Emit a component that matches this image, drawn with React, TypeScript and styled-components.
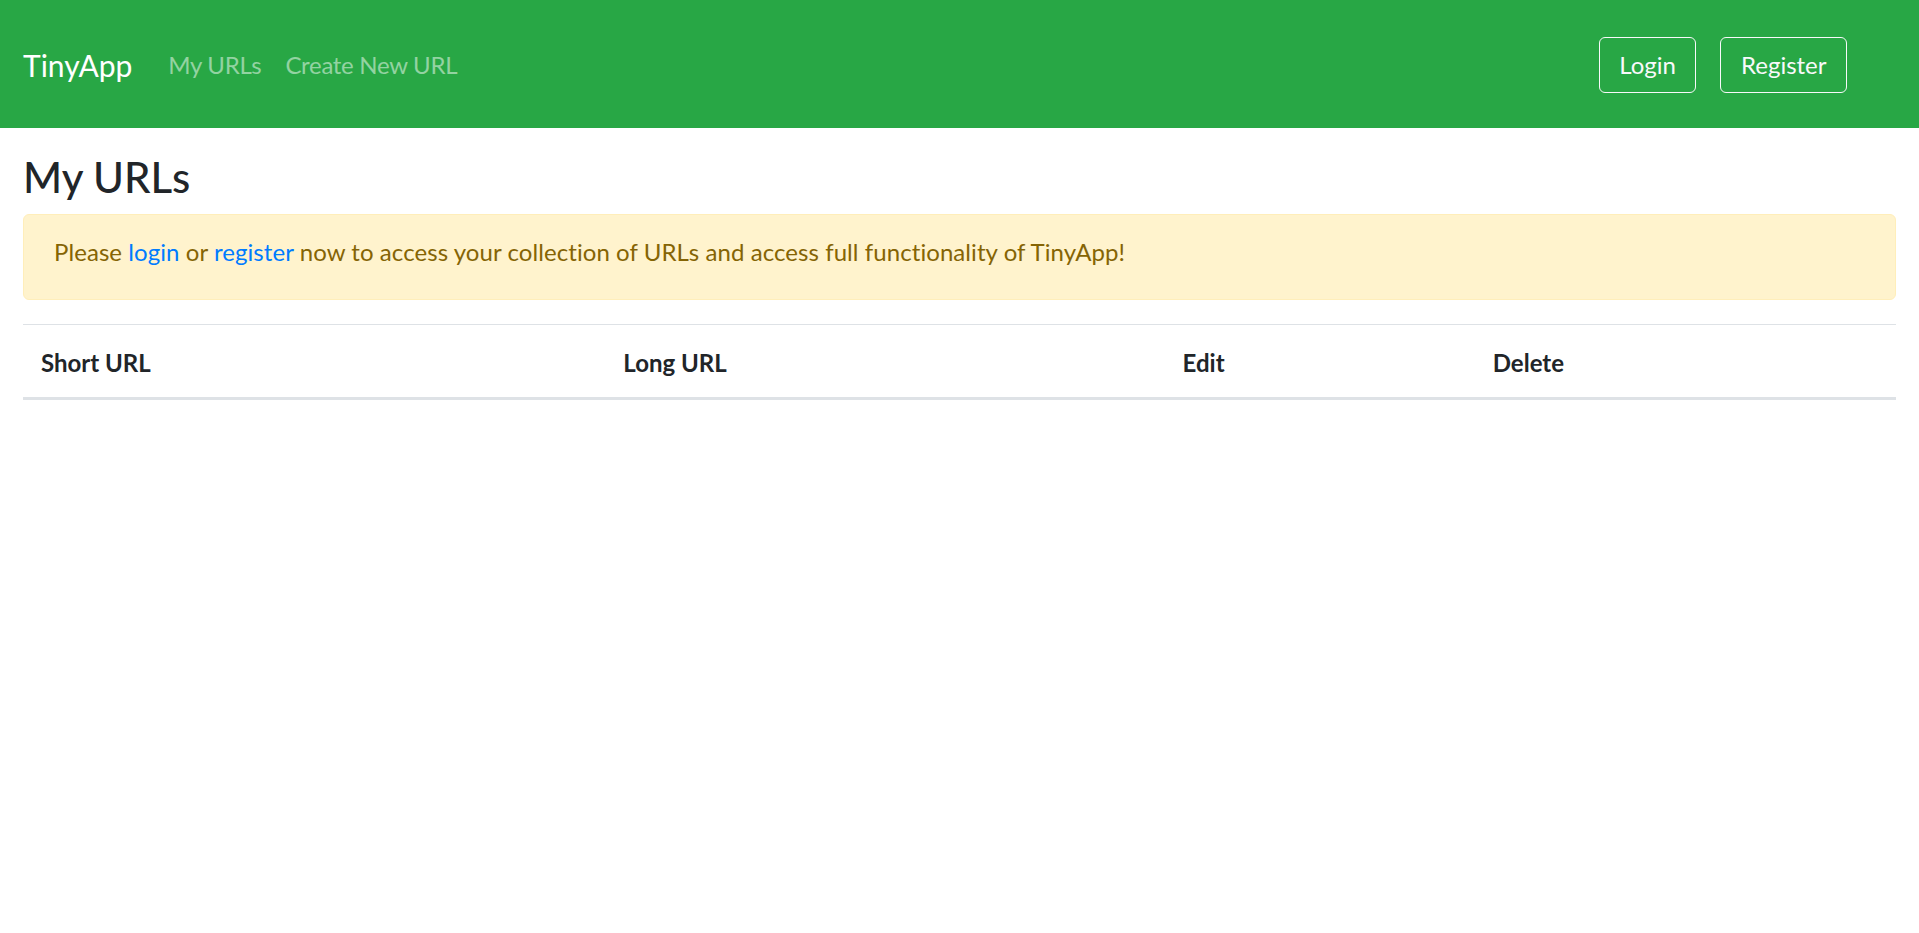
import React from "react";
import styled, { createGlobalStyle } from "styled-components";

const GlobalStyle = createGlobalStyle`
  * { box-sizing: border-box; }
  body {
    margin: 0;
    background: #ffffff;
    color: #212529;
    font-family: Lato, "Open Sans", "Liberation Sans", sans-serif;
    font-size: 24px;
    line-height: 1.5;
  }
`;

const Navbar = styled.nav`
  display: flex;
  align-items: center;
  height: 128px;
  padding: 2px 72px 0 23px;
  background: #28a745;
`;

const Brand = styled.a`
  font-size: 30px;
  line-height: 45px;
  color: #ffffff;
  text-decoration: none;
  margin-right: 24px;
`;

const NavList = styled.div`
  display: flex;
  align-items: center;
`;

const NavLink = styled.a`
  padding: 0 12px;
  font-size: 24px;
  line-height: 36px;
  letter-spacing: -0.3px;
  color: rgba(255, 255, 255, 0.5);
  text-decoration: none;
`;

const NavRight = styled.div`
  margin-left: auto;
  display: flex;
  align-items: center;
  gap: 24px;
`;

const OutlineButton = styled.button`
  font-family: inherit;
  font-size: 24px;
  line-height: 36px;
  padding: 9px 19.5px;
  color: #f8f9fa;
  background: transparent;
  border: 1.5px solid #f8f9fa;
  border-radius: 6px;
  cursor: pointer;
`;

const Main = styled.main`
  padding: 0 23px;
`;

const Title = styled.h1`
  margin: 23.6px 0 12px;
  font-size: 42px;
  line-height: 1.2;
  font-weight: 500;
`;

const Alert = styled.div`
  padding: 19.5px 30px 28.5px;
  margin-bottom: 24px;
  background: #fff3cd;
  border: 1.5px solid #ffeeba;
  border-radius: 6px;
  color: #856404;
  font-size: 24px;
  line-height: 36px;
  letter-spacing: 0.07px;
`;

const AlertLink = styled.a`
  color: #007bff;
  text-decoration: none;
`;

const Table = styled.table`
  width: 100%;
  border-collapse: collapse;
`;

const HeadCell = styled.th<{ $w: number }>`
  width: ${(p) => p.$w}px;
  padding: 20px 18px 16px;
  text-align: left;
  vertical-align: bottom;
  font-weight: 700;
  font-size: 24px;
  line-height: 36px;
  border-top: 1.5px solid #dee2e6;
  border-bottom: 3px solid #dee2e6;
`;

const columns = [
  { label: "Short URL", w: 582 },
  { label: "Long URL", w: 559 },
  { label: "Edit", w: 310 },
  { label: "Delete", w: 421 },
];

export default function App() {
  return (
    <>
      <GlobalStyle />
      <Navbar>
        <Brand href="#">TinyApp</Brand>
        <NavList>
          <NavLink href="#">My URLs</NavLink>
          <NavLink href="#">Create New URL</NavLink>
        </NavList>
        <NavRight>
          <OutlineButton>Login</OutlineButton>
          <OutlineButton>Register</OutlineButton>
        </NavRight>
      </Navbar>
      <Main>
        <Title>My URLs</Title>
        <Alert>
          Please <AlertLink href="#">login</AlertLink> or{" "}
          <AlertLink href="#">register</AlertLink> now to access your collection of URLs and
          access full functionality of TinyApp!
        </Alert>
        <Table>
          <thead>
            <tr>
              {columns.map((c) => (
                <HeadCell key={c.label} $w={c.w}>
                  {c.label}
                </HeadCell>
              ))}
            </tr>
          </thead>
          <tbody />
        </Table>
      </Main>
    </>
  );
}
